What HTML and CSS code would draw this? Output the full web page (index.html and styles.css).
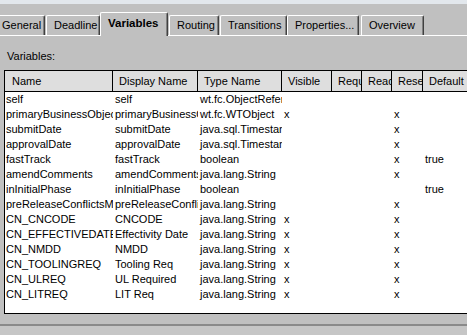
FILE: index.html
```html
<!DOCTYPE html>
<html lang="en">
  <head>
    <meta charset="utf-8" />
    <title>Variables</title>
    <link rel="stylesheet" href="styles.css">
  </head>
  <body>
    <div class="topstrip"></div>
    <nav class="tabs">
      <div class="tab tab-general">General</div>
      <div class="tab tab-deadline">Deadline</div>
      <div class="tab tab-variables selected">Variables</div>
      <div class="tab tab-routing">Routing</div>
      <div class="tab tab-transitions">Transitions</div>
      <div class="tab tab-properties">Properties...</div>
      <div class="tab tab-overview">Overview</div>
    </nav>
    <main class="panel">
      <div class="label">Variables:</div>
      <div class="grid">
        <div class="row head">
          <div class="cell">Name</div>
          <div class="cell">Display Name</div>
          <div class="cell">Type Name</div>
          <div class="cell">Visible</div>
          <div class="cell">Required</div>
          <div class="cell">Read Only</div>
          <div class="cell">Reset</div>
          <div class="cell">Default</div>
        </div>
        <div class="body" id="rows"></div>
      </div>
    </main>
    <footer class="bottom"></footer>
    <script>
      const vars = [
        ["self", "self", "wt.fc.ObjectReference", "", "", "", "", ""],
        ["primaryBusinessObject", "primaryBusinessObject", "wt.fc.WTObject", "x", "", "", "x", ""],
        ["submitDate", "submitDate", "java.sql.Timestamp", "", "", "", "x", ""],
        ["approvalDate", "approvalDate", "java.sql.Timestamp", "", "", "", "x", ""],
        ["fastTrack", "fastTrack", "boolean", "", "", "", "x", "true"],
        ["amendComments", "amendComments", "java.lang.String", "", "", "", "x", ""],
        ["inInitialPhase", "inInitialPhase", "boolean", "", "", "", "", "true"],
        ["preReleaseConflictsMessage", "preReleaseConflicts", "java.lang.String", "", "", "", "x", ""],
        ["CN_CNCODE", "CNCODE", "java.lang.String", "x", "", "", "x", ""],
        ["CN_EFFECTIVEDATE", "Effectivity Date", "java.lang.String", "x", "", "", "x", ""],
        ["CN_NMDD", "NMDD", "java.lang.String", "x", "", "", "x", ""],
        ["CN_TOOLINGREQ", "Tooling Req", "java.lang.String", "x", "", "", "x", ""],
        ["CN_ULREQ", "UL Required", "java.lang.String", "x", "", "", "x", ""],
        ["CN_LITREQ", "LIT Req", "java.lang.String", "x", "", "", "x", ""]
      ];
      const rows = document.getElementById("rows");
      vars.map(v => {
        const row = document.createElement("div");
        row.className = "row";
        v.map(text => {
          const cell = document.createElement("div");
          cell.className = "cell";
          cell.textContent = text;
          row.appendChild(cell);
        });
        rows.appendChild(row);
      });
    </script>
  </body>
</html>
```

FILE: styles.css
```css
body {
  background-color: #c0c0c0;
  font-family: "Liberation Sans", Arial, sans-serif;
  font-size: 11px;
  color: #000;
  margin: 0;
  overflow: hidden;
  height: 335px;
}
.topstrip {
  height: 4px;
  background-color: #e2e7ec;
}
.tabs {
  display: flex;
  align-items: flex-end;
  height: 31px;
  border-bottom: 1px solid #fff;
  margin-left: -6px;
}
.tab {
  box-sizing: border-box;
  height: 20px;
  line-height: 19px;
  padding-left: 7px;
  background-color: #c0c0c0;
  border-top: 1px solid #fff;
  border-left: 1px solid #fff;
  border-right: 1px solid #404040;
  box-shadow: inset -1px 0 #808080;
  border-radius: 2px 2px 0 0;
  white-space: nowrap;
}
.tab-general { width: 51px; }
.tab-deadline { width: 54px; margin-left: 1px; }
.tab-variables { width: 68px; }
.tab-routing { width: 50px; margin-left: 1px; }
.tab-transitions { width: 67px; margin-left: 1px; }
.tab-properties { width: 72px; }
.tab-overview { width: 63px; margin-left: 2px; }
.tab.selected {
  height: 24px;
  margin-bottom: -1px;
  font-weight: bold;
  font-size: 11.5px;
  line-height: 21px;
}
.panel {
  padding: 14px 0 0 4px;
}
.label {
  line-height: 13px;
  height: 13px;
  padding-left: 3px;
  margin-bottom: 7px;
}
.grid {
  width: 463px;
  box-sizing: border-box;
  border: 1px solid #000;
  border-right: none;
  background-color: #fff;
}
.row {
  display: grid;
  grid-template-columns: 108px 85px 84px 50px 30px 30px 31px 1fr;
}
.cell {
  box-sizing: border-box;
  overflow: hidden;
  white-space: nowrap;
  text-overflow: clip;
  height: 15px;
  line-height: 15px;
  padding-left: 2px;
}
.row .cell:first-child {
  padding-left: 1px;
}
.head {
  background-color: #dedede;
  border-bottom: 1px solid #000;
}
.head .cell {
  height: 20px;
  line-height: 21px;
  padding-left: 6px;
  border-right: 1px solid #000;
}
.head .cell:first-child {
  padding-left: 7px;
}
.head .cell:last-child {
  border-right: none;
}
.body {
  height: 221px;
}
.bottom {
  margin-top: 10px;
  height: 12px;
  border-top: 2px solid #8a8a8a;
  background-color: #c6c6c6;
}
```
